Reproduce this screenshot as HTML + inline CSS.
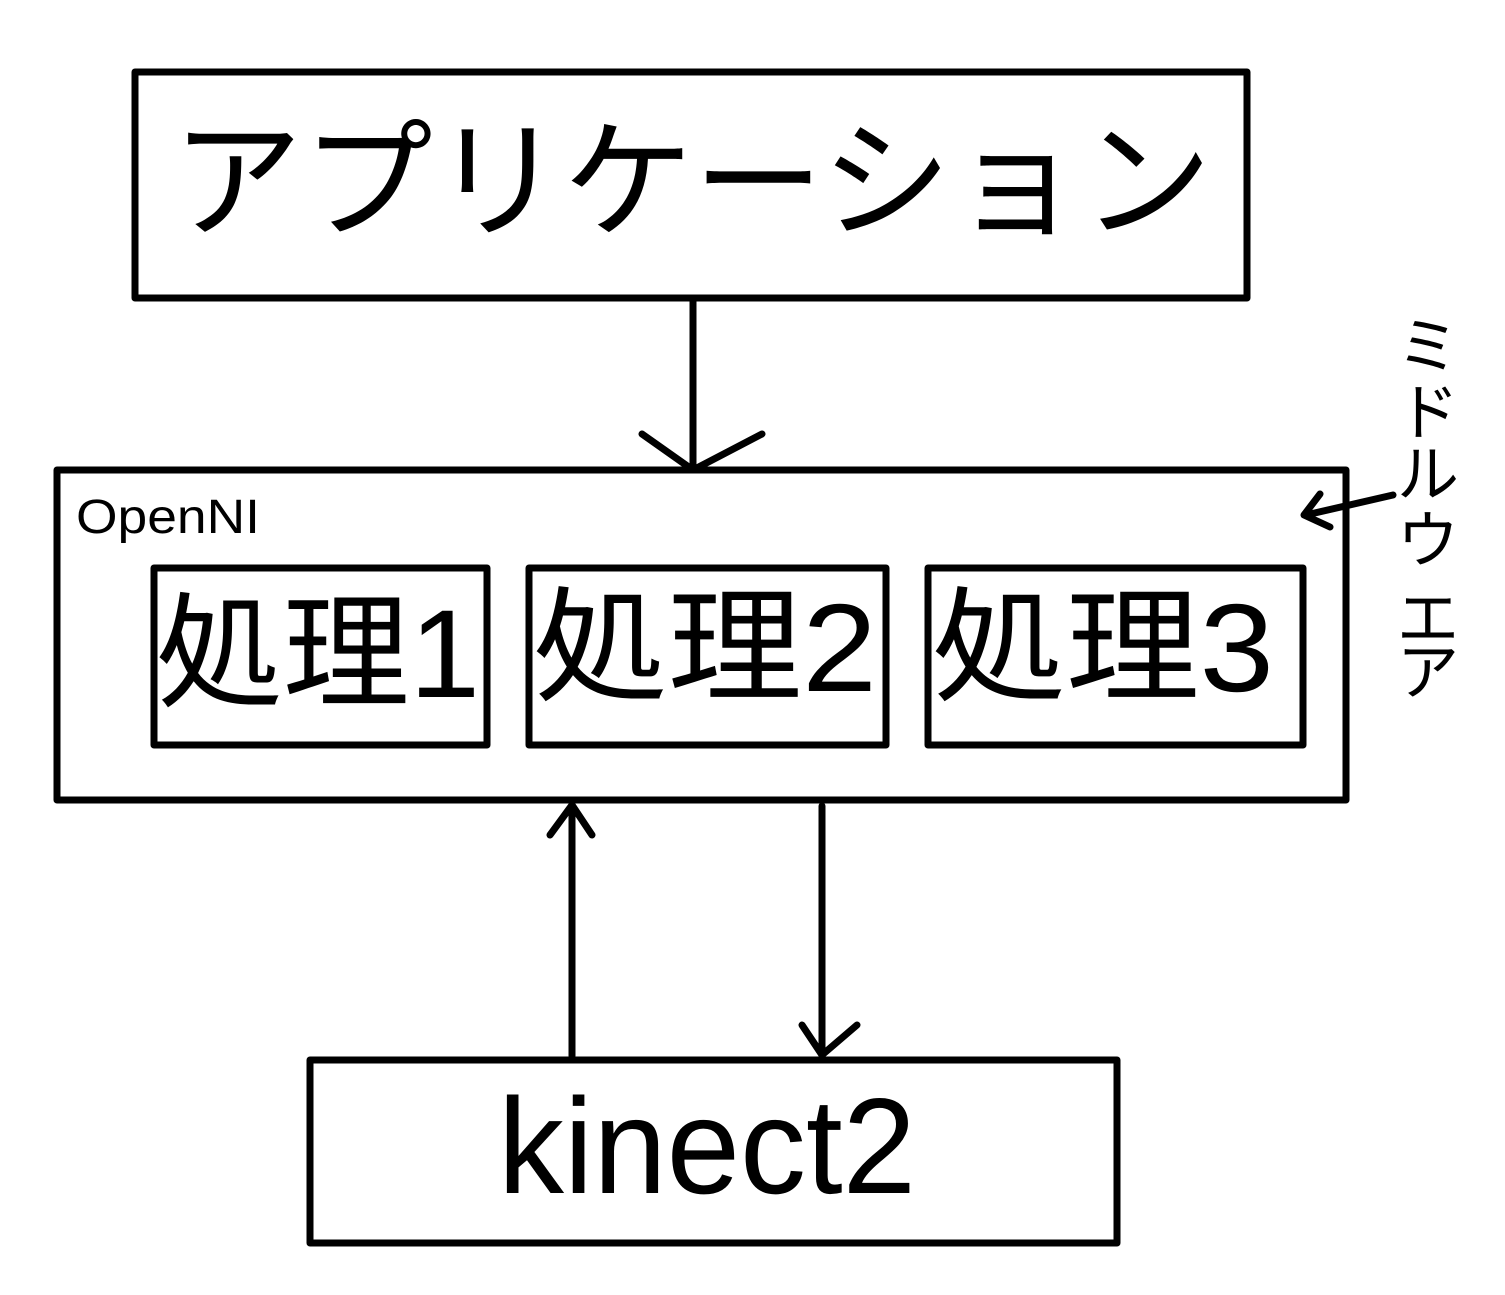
<!DOCTYPE html>
<html><head><meta charset="utf-8"><style>
html,body{margin:0;padding:0;background:#fff;}
svg{display:block;}
text{font-family:"Liberation Sans","Noto Sans CJK JP",sans-serif;fill:#000;}
</style></head><body>
<svg width="1505" height="1295" viewBox="0 0 1505 1295" xmlns="http://www.w3.org/2000/svg">
<g fill="none" stroke="#000" stroke-width="7" stroke-linecap="round" stroke-linejoin="round">
<rect x="135" y="72" width="1112" height="226"/>
<rect x="57" y="470" width="1289" height="330"/>
<rect x="154" y="568" width="333" height="177"/>
<rect x="529" y="568" width="357" height="177"/>
<rect x="928" y="568" width="375" height="177"/>
<rect x="310" y="1060" width="807" height="183"/>
<path d="M693 300 V470 M642 434 L693 470 L762 434"/>
<path d="M572 1056 V804 M550 835 L572 805 L592 835"/>
<path d="M822 806 V1056 M802 1025 L822 1055 L857 1025"/>
<path d="M1393 495 L1306 515 M1320 494 L1304 515 L1330 527"/>
</g>
<text x="172" y="227" font-size="130" textLength="1040" lengthAdjust="spacingAndGlyphs">アプリケーション</text>
<text x="76" y="533" font-size="48" textLength="184" lengthAdjust="spacingAndGlyphs">OpenNI</text>
<text x="156" y="697" font-size="125" textLength="324" lengthAdjust="spacingAndGlyphs">処理1</text>
<text x="533" y="691" font-size="125" textLength="344" lengthAdjust="spacingAndGlyphs">処理2</text>
<text x="932" y="691" font-size="125" textLength="342" lengthAdjust="spacingAndGlyphs">処理3</text>
<text x="498" y="1193" font-size="136" textLength="418" lengthAdjust="spacingAndGlyphs">kinect2</text>
<g font-size="62" text-anchor="middle">
<text x="1428" y="368">ミ</text>
<text x="1428" y="434">ド</text>
<text x="1428" y="496">ル</text>
<text x="1428" y="562">ウ</text>
<text x="1428" y="640">エ</text>
<text x="1428" y="694">ア</text>
</g>
</svg>
</body></html>
